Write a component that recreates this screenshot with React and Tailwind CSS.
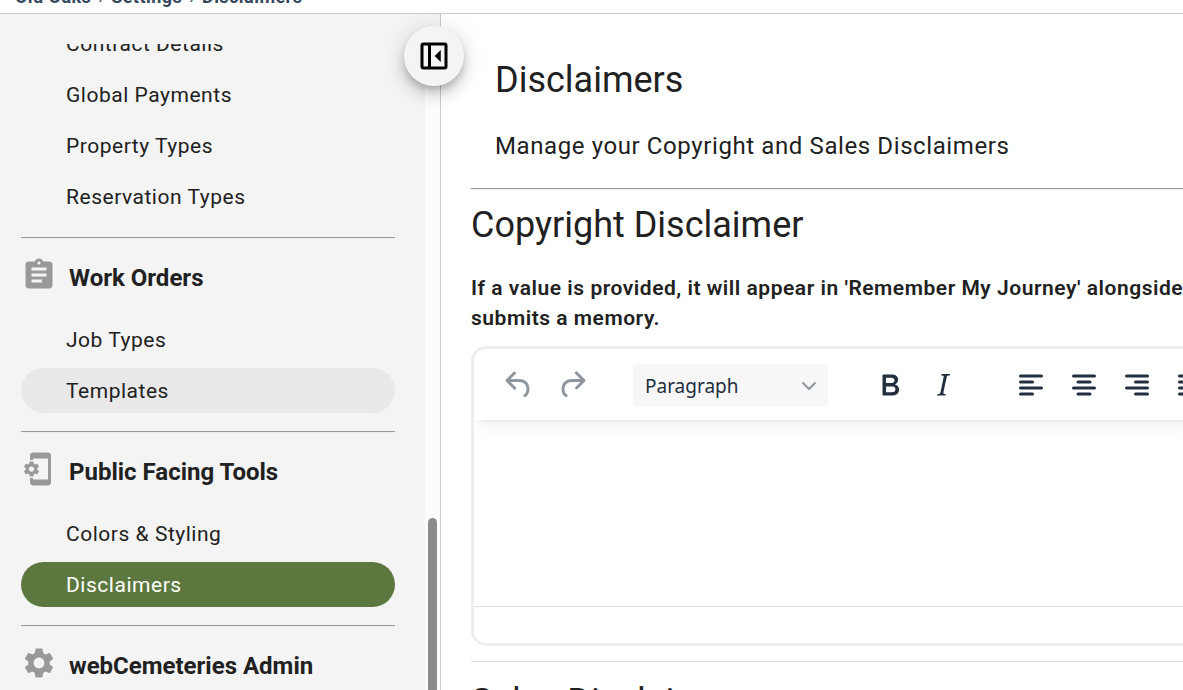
import { MdAssignment, MdPhonelinkSetup, MdSettings } from "react-icons/md";
import { LuChevronDown } from "react-icons/lu";

const sections = [
    {
        title: "Work Orders",
        icon: MdAssignment,
        items: [{ name: "Job Types" }, { name: "Templates", hovered: true }]
    },
    {
        title: "Public Facing Tools",
        icon: MdPhonelinkSetup,
        items: [{ name: "Colors & Styling" }, { name: "Disclaimers", active: true }]
    },
    { title: "webCemeteries Admin", icon: MdSettings, items: [] }
];

const contractItems = ["Contract Details", "Global Payments", "Property Types", "Reservation Types"];

const Divider = () => <hr className="h-0.5 border-t border-b border-t-[#9a9a9a] border-b-[#eeeeee]" />;

const NavItem = ({ name, active, hovered }) => (
    <li>
        <a
            href="#"
            aria-current={active ? "page" : undefined}
            className={`flex h-[45px] items-center rounded-full pt-0.5 pl-[45px] text-[21px] tracking-wide ${
                active ? "bg-[#5c783e] text-white" : hovered ? "bg-[#e9e9e9]" : ""
            }`}
        >
            {name}
        </a>
    </li>
);

const NavSection = ({ title, icon: Icon, items }) => (
    <section className="mt-[18px]">
        <Divider />
        <div className="flex h-[78px] items-start gap-3 pt-[18px]">
            <Icon className="size-9 shrink-0 text-[#999999]" />
            <h2 className="text-2xl leading-[42px] font-bold whitespace-nowrap">{title}</h2>
        </div>
        <ul className="flex flex-col gap-1.5">
            {items.map((item) => <NavItem key={item.name} {...item} />)}
        </ul>
    </section>
);

const Sidebar = () => (
    <aside className="relative z-10 flex w-[441px] shrink-0 flex-col border-r border-[#cccccc] bg-[#f4f4f4] pt-[30px]">
        <div className="flex min-h-0 flex-1">
            <nav className="flex-1 overflow-hidden pr-[30px] pl-[21px]">
                <ul className="-mt-[23px] flex flex-col gap-1.5">
                    {contractItems.map((name) => <NavItem key={name} name={name} />)}
                </ul>
                {sections.map((section) => <NavSection key={section.title} {...section} />)}
            </nav>
            <div className="flex w-[15px] flex-col justify-end bg-[#fcfcfc] px-[3px]">
                <div className="h-[172px] rounded-t-full bg-[#8b8b8b]" />
            </div>
        </div>
        <button
            type="button"
            aria-label="Collapse menu"
            className="absolute top-3 -right-6 flex size-[60px] items-center justify-center rounded-full bg-[#f4f4f4] text-black shadow-[0_5px_8px_-2px_rgba(0,0,0,0.2),0_9px_15px_rgba(0,0,0,0.14),0_2px_27px_rgba(0,0,0,0.12)]"
        >
            <svg viewBox="0 0 24 24" className="size-9">
                <rect x="4" y="4" width="16" height="16" rx="1" fill="none" stroke="currentColor" strokeWidth="2" />
                <path d="M9 4v16" stroke="currentColor" strokeWidth="2" />
                <path d="M16.5 8v8l-4-4z" fill="currentColor" />
            </svg>
        </button>
    </aside>
);

const icons = {
    Undo: "M6.4 8H12c3.7 0 6.2 2 6.8 5.1.6 2.7-.4 5.6-2.3 6.8a1 1 0 0 1-1-1.8c1.1-.6 1.8-2.7 1.4-4.6-.5-2.1-2.1-3.5-4.9-3.5H6.4l3.3 3.3a1 1 0 1 1-1.4 1.4l-5-5a1 1 0 0 1 0-1.4l5-5a1 1 0 0 1 1.4 1.4L6.4 8Z",
    Redo: "M17.6 10H12c-2.8 0-4.4 1.4-4.9 3.5-.4 2 .3 4 1.4 4.6a1 1 0 1 1-1 1.8c-2-1.2-2.9-4.1-2.3-6.8.6-3 3-5.1 6.8-5.1h5.6l-3.3-3.3a1 1 0 1 1 1.4-1.4l5 5a1 1 0 0 1 0 1.4l-5 5a1 1 0 0 1-1.4-1.4l3.3-3.3Z",
    Bold: "M7.8 19c-.3 0-.5 0-.6-.2l-.2-.5V5.7c0-.2 0-.4.2-.5l.6-.2h5c1.5 0 2.7.3 3.5 1 .7.6 1.1 1.4 1.1 2.5a3 3 0 0 1-.6 1.9c-.4.6-1 1-1.6 1.2.4.1.9.3 1.3.6s.8.7 1 1.2c.4.4.5 1 .5 1.6 0 1.3-.4 2.3-1.3 3-.8.7-2.1 1-3.8 1H7.8Zm5-8.3c.6 0 1.2-.1 1.6-.5.4-.3.6-.7.6-1.3 0-1.1-.8-1.7-2.3-1.7H9.3v3.5h3.4Zm.5 6c.7 0 1.3-.1 1.7-.4.4-.4.6-.9.6-1.5s-.2-1-.7-1.4c-.4-.3-1-.4-2-.4H9.4v3.8h4Z",
    Italic: "m16.7 4.7-.1.9h-.3c-.6 0-1 0-1.4.3-.3.3-.4.6-.5 1.1l-2.1 9.8v.6c0 .5.4.8 1.4.8h.2l-.2.8H8l.2-.8h.2c1.1 0 1.8-.5 2-1.5l2-9.8.1-.5c0-.6-.4-.8-1.4-.8h-.3l.2-.9h5.8Z"
};

const aligns = {
    "Align left": "M5 6h14M5 10h8M5 14h14M5 18h8",
    "Align center": "M5 6h14M8 10h8M5 14h14M8 18h8",
    "Align right": "M5 6h14M11 10h8M5 14h14M11 18h8",
    Justify: "M5 6h14M5 10h14M5 14h14M5 18h14"
};

const ToolButton = ({ label, disabled }) => (
    <button
        type="button"
        aria-label={label}
        disabled={disabled}
        className="flex h-[42px] w-[53px] shrink-0 items-center justify-center text-[#222f3e] disabled:opacity-50"
    >
        <svg viewBox="0 0 24 24" className="size-9">
            {icons[label] ?
                <path d={icons[label]} fill="currentColor" fillRule="evenodd" /> :
                <path d={aligns[label]} stroke="currentColor" strokeWidth="2" strokeLinecap="round" />}
        </svg>
    </button>
);

const Editor = () => (
    <div className="-mr-4 overflow-hidden rounded-[15px] border-3 border-[#eeeeee]">
        <div className="flex h-[71px] gap-[35px] pt-[15px] pl-[18px] shadow-[0_3px_3px_-3px_rgba(34,47,62,0.1),0_12px_12px_-6px_rgba(34,47,62,0.07)]">
            <div className="flex">
                <ToolButton label="Undo" disabled />
                <ToolButton label="Redo" disabled />
            </div>
            <div className="relative h-[42px] w-[195px] shrink-0">
                <select
                    aria-label="Block format"
                    className="size-full appearance-none rounded-sm bg-[#f7f7f7] pt-0.5 pr-10 pl-3 font-['Noto_Sans',sans-serif] text-[19px] text-[#222f3e]"
                >
                    <option>Paragraph</option>
                </select>
                <LuChevronDown className="pointer-events-none absolute top-2.5 right-[7px] size-6 text-[#8f969e]" />
            </div>
            <div className="flex">
                <ToolButton label="Bold" />
                <ToolButton label="Italic" />
            </div>
            <div className="flex">
                {Object.keys(aligns).map((label) => <ToolButton key={label} label={label} />)}
            </div>
        </div>
        <textarea aria-label="Copyright disclaimer" className="block h-[186px] w-full resize-none px-4 py-6 outline-none" />
        <div className="h-[37px] border-t border-[#e0e0e0]" />
    </div>
);

const App = () => {
    return (
        <div className="flex h-screen flex-col overflow-hidden bg-white font-[Roboto,sans-serif] text-[#212121]">
            <header className="flex h-3.5 shrink-0 items-end overflow-hidden border-b border-[#cccccc] px-[15px]">
                <nav aria-label="Breadcrumb" className="flex gap-[7px] text-lg leading-8 font-bold tracking-wide text-[#34495e]">
                    <a href="#">Old Oaks</a>
                    <span className="font-normal">›</span>
                    <a href="#">Settings</a>
                    <span className="font-normal">›</span>
                    <a href="#">Disclaimers</a>
                </nav>
            </header>
            <div className="flex min-h-0 flex-1">
                <Sidebar />
                <main className="min-w-0 flex-1 overflow-hidden pl-[30px]">
                    <div className="px-6 pt-[42px] pb-6">
                        <h1 className="text-4xl leading-12">Disclaimers</h1>
                        <p className="mt-6 text-2xl leading-9 tracking-wide">Manage your Copyright and Sales Disclaimers</p>
                    </div>
                    <Divider />
                    <h2 className="mt-[11px] text-4xl leading-12">Copyright Disclaimer</h2>
                    <p className="mt-6 mb-[13px] text-[21px] leading-[30px] font-semibold tracking-wide whitespace-nowrap">
                        If a value is provided, it will appear in 'Remember My Journey' alongside the
                        <br />
                        submits a memory.
                    </p>
                    <Editor />
                    <hr className="mt-[15px] border-[#dddddd]" />
                    <h2 className="mt-4 text-4xl leading-12">Sales Disclaimer</h2>
                </main>
            </div>
        </div>
    );
};

export default App;
